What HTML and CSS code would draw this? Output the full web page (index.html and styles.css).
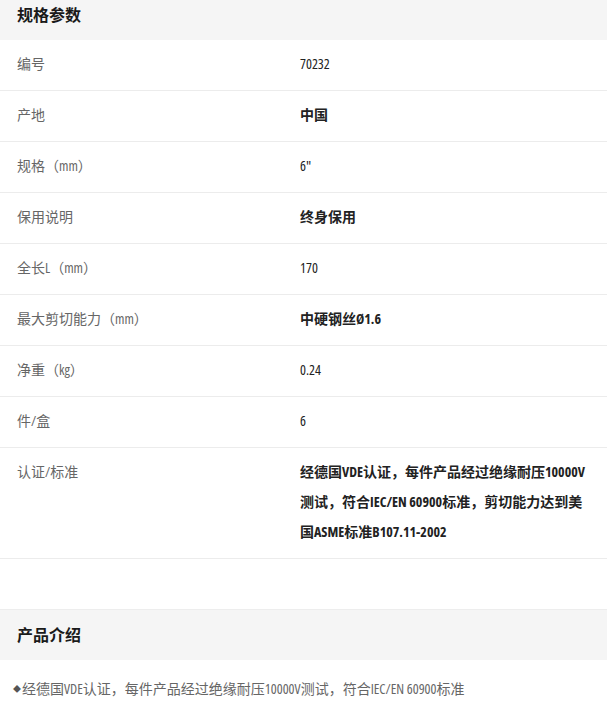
FILE: index.html
```html
<!DOCTYPE html>
<html lang="zh-CN">
<head>
<meta charset="utf-8">
<title>规格参数</title>
<link rel="stylesheet" href="styles.css">
</head>
<body>
<section class="block block-first">
  <h2 class="band">规格参数</h2>
  <dl class="specs">
    <div class="row"><dt class="label">编号</dt><dd class="value">70232</dd></div>
    <div class="row"><dt class="label">产地</dt><dd class="value strong">中国</dd></div>
    <div class="row"><dt class="label">规格（mm）</dt><dd class="value">6"</dd></div>
    <div class="row"><dt class="label">保用说明</dt><dd class="value strong">终身保用</dd></div>
    <div class="row"><dt class="label">全长L（mm）</dt><dd class="value">170</dd></div>
    <div class="row"><dt class="label">最大剪切能力（mm）</dt><dd class="value strong">中硬钢丝Ø1.6</dd></div>
    <div class="row"><dt class="label">净重（kg）</dt><dd class="value">0.24</dd></div>
    <div class="row"><dt class="label">件/盒</dt><dd class="value">6</dd></div>
    <div class="row"><dt class="label">认证/标准</dt><dd class="value strong">经德国VDE认证，每件产品经过绝缘耐压10000V测试，符合IEC/EN 60900标准，剪切能力达到美国ASME标准B107.11-2002</dd></div>
  </dl>
</section>
<section class="block block-intro">
  <h2 class="band band-lined">产品介绍</h2>
  <p class="bullet"><span class="dot">◆</span>经德国VDE认证，每件产品经过绝缘耐压10000V测试，符合IEC/EN 60900标准</p>
</section>
</body>
</html>
```
FILE: styles.css
```css
html, body {
  margin: 0;
  padding: 0;
  background: #ffffff;
}
body {
  font-family: "Open Sans", "Noto Sans CJK SC", sans-serif;
  font-stretch: condensed;
  font-size: 14px;
  color: #222222;
}
.block-first {
  margin-top: -10px;
}
.band {
  margin: 0;
  height: 50px;
  line-height: 50px;
  padding: 0 17px;
  background: #f5f5f5;
  font-size: 16px;
  font-weight: bold;
  color: #1a1a1a;
}
.band-lined {
  border-top: 1px solid #ededed;
}
.specs {
  margin: 0;
  padding: 0;
}
.row {
  display: grid;
  grid-template-columns: 300px 292px;
  border-bottom: 1px solid #ececec;
  padding: 9px 0 11px;
  line-height: 30px;
}
.label {
  margin: 0;
  padding-left: 17px;
  color: #666666;
}
.value {
  margin: 0;
  color: #222222;
}
.strong {
  font-weight: bold;
}
.block-intro {
  margin-top: 50px;
}
.bullet {
  margin: 0;
  padding: 14px 0 0 13px;
  line-height: 30px;
  color: #666666;
}
.dot {
  font-size: 8px;
  vertical-align: 2px;
  margin-right: 1px;
  color: #555555;
}
```
